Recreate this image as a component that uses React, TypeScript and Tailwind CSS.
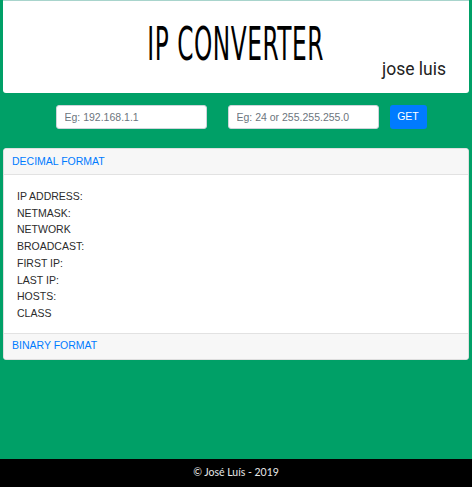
export default function App() {
  const rows = ['IP ADDRESS:', 'NETMASK:', 'NETWORK', 'BROADCAST:', 'FIRST IP:', 'LAST IP:', 'HOSTS:', 'CLASS'];
  return (
    <div className="flex min-h-[487px] flex-col bg-[#00a067] font-['Liberation_Sans',Arial,sans-serif]">
      <div className="flex-1">
        {/* header */}
        <header className="mx-[3px] mt-0 h-[93px] rounded-b-[3px] border-t border-[#a8d4cc] bg-white">
          <div className="flex h-[66px] items-end justify-center">
            <h1 className="origin-center scale-x-[0.55] font-['DejaVu_Sans_Condensed',sans-serif] text-[47px] font-light leading-none tracking-[1px] text-black">
              IP CONVERTER
            </h1>
          </div>
          <div className="-mt-[9px] flex justify-end pr-[23px]">
            <span className="font-['Roboto',sans-serif] text-[17.5px] font-normal leading-[22px] text-[#222]">jose luis</span>
          </div>
        </header>

        {/* form */}
        <div className="mt-[12px] flex items-center justify-center gap-[21px] pl-[10px]">
          <input
            className="h-[24px] w-[151px] rounded-[3px] border border-[#ced4da] bg-white px-[8px] text-[10.5px] outline-none placeholder:text-[#6c757d]"
            placeholder="Eg: 192.168.1.1"
          />
          <div className="flex items-center gap-[11px]">
            <input
              className="h-[24px] w-[151px] rounded-[3px] border border-[#ced4da] bg-white px-[8px] text-[10.5px] outline-none placeholder:text-[#6c757d]"
              placeholder="Eg: 24 or 255.255.255.0"
            />
            <button className="h-[24px] w-[37px] rounded-[3px] bg-[#007bff] text-[10.5px] text-white">GET</button>
          </div>
        </div>

        {/* results card */}
        <div className="mx-[3px] mt-[19px] overflow-hidden rounded-[3px] border border-[#dfdfdf] bg-white">
          <div className="flex h-[26px] items-center border-b border-[#e2e2e2] bg-[#f7f7f7] px-[8px] text-[10.5px] text-[#007bff]">
            DECIMAL FORMAT
          </div>
          <div className="flex flex-col px-[13px] pb-[11px] pt-[13px] text-[10.5px] leading-[16.7px] text-[#2b2b2b]">
            {rows.map((r) => (
              <div key={r}>{r}</div>
            ))}
          </div>
          <div className="flex h-[26px] items-center border-t border-[#e2e2e2] bg-[#f7f7f7] px-[8px] text-[10.5px] text-[#007bff]">
            BINARY FORMAT
          </div>
        </div>
      </div>

      {/* footer */}
      <footer className="flex h-[28px] items-center justify-center bg-black font-['Lato',sans-serif] text-[10.5px] text-[#e8e8e8]">
        © José Luís - 2019
      </footer>
    </div>
  );
}
